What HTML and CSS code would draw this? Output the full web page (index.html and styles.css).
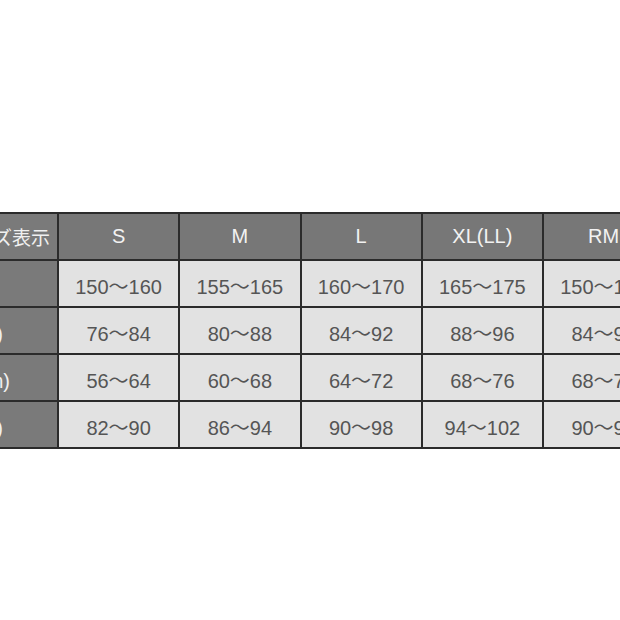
FILE: index.html
```html
<!DOCTYPE html>
<html lang="ja">
<head>
<meta charset="utf-8">
<title>サイズ表</title>
<link rel="stylesheet" href="styles.css">
</head>
<body>
<div class="chart">
  <div class="cell head label label-head">サイズ表示</div>
  <div class="cell head">S</div>
  <div class="cell head">M</div>
  <div class="cell head">L</div>
  <div class="cell head">XL(LL)</div>
  <div class="cell head">RM</div>

  <div class="cell label label-r1">身長(cm)</div>
  <div class="cell">150〜160</div>
  <div class="cell">155〜165</div>
  <div class="cell">160〜170</div>
  <div class="cell">165〜175</div>
  <div class="cell">150〜170</div>

  <div class="cell label label-r2">胸囲(cm)</div>
  <div class="cell">76〜84</div>
  <div class="cell">80〜88</div>
  <div class="cell">84〜92</div>
  <div class="cell">88〜96</div>
  <div class="cell">84〜96</div>

  <div class="cell label label-r3">ウエスト(cm)</div>
  <div class="cell">56〜64</div>
  <div class="cell">60〜68</div>
  <div class="cell">64〜72</div>
  <div class="cell">68〜76</div>
  <div class="cell">68〜76</div>

  <div class="cell label label-r4">ヒップ(cm)</div>
  <div class="cell">82〜90</div>
  <div class="cell">86〜94</div>
  <div class="cell">90〜98</div>
  <div class="cell">94〜102</div>
  <div class="cell">90〜98</div>
</div>
</body>
</html>
```

FILE: styles.css
```css
html, body {
  margin: 0;
  padding: 0;
  background: #ffffff;
  overflow: hidden;
  width: 620px;
  height: 620px;
}

body {
  font-family: "Liberation Sans", "Noto Sans CJK JP", sans-serif;
}

.chart {
  display: grid;
  grid-template-columns: repeat(6, 119.25px);
  grid-auto-rows: 45px;
  gap: 2px;
  padding: 2px;
  background: #2b2b2b;
  width: max-content;
  margin-top: 212px;
  margin-left: -64.25px;
}

.cell {
  display: flex;
  align-items: center;
  justify-content: center;
  background: #e2e2e2;
  color: #555555;
  font-size: 20px;
  white-space: nowrap;
  overflow: hidden;
  padding-top: 3px;
  box-sizing: border-box;
}

.head {
  background: #777777;
  color: #f2f2f2;
  padding-top: 0;
}

.label {
  background: #7a7a7a;
  color: #f0f0f0;
  justify-content: flex-end;
}

.label-head { padding-right: 7px; font-size: 19px; }
.label-r1 { padding-right: 70px; }
.label-r2 { padding-right: 54px; }
.label-r3 { padding-right: 47px; }
.label-r4 { padding-right: 54px; }
```
